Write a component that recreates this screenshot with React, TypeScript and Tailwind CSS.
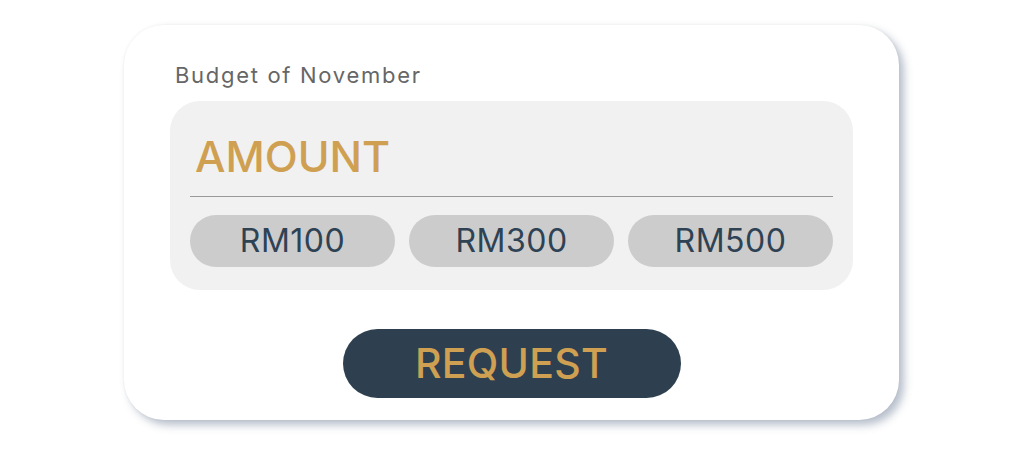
import React, { useState } from 'react';

const presets = [100, 300, 500];

const App: React.FC = () => {
  const [ amount, setAmount ] = useState<string>('');

  return (
    <div className="w-[1024px] h-[470px] bg-white pt-[25px] font-['Inter',sans-serif]">
      <div className="ml-[124px] w-[775px] h-[395px] rounded-[40px] bg-white shadow-[5px_5px_8px_rgba(95,112,140,0.45),0_0_3px_rgba(0,0,0,0.06)] px-[46px] pt-[36px]">
        <p className="text-[22px] leading-[28px] tracking-[1.7px] text-[#666666] pl-[5px]">Budget of November</p>
        <div className="mt-[12px] h-[189px] rounded-[30px] bg-[#f1f1f1] px-[20px] pt-[27px]">
          <input
            className="w-full bg-transparent outline-none px-[5px] text-[43px] font-medium leading-[56px] text-[#cfa052] placeholder:text-[#cfa052] border-b-[1.5px] border-[#999999] pb-[12px]"
            onChange={e => setAmount(e.target.value)}
            placeholder="AMOUNT"
            type="text"
            value={amount}
          />
          <div className="mt-[18px] grid grid-cols-3 gap-[14px]">
            {presets.map(value => (
              <button
                key={value}
                className="h-[52px] rounded-full bg-[#cccccc] text-[#2e4254] text-[32px] tracking-[0.5px] leading-none"
                onClick={() => setAmount(String(value))}
              >
                RM{value}
              </button>
            ))}
          </div>
        </div>
        <div className="mt-[39px] flex justify-center">
          <button className="w-[338px] h-[69px] rounded-full bg-[#2e4050] text-[#cfa052] text-[41px] tracking-[0.3px] font-medium leading-none">
            REQUEST
          </button>
        </div>
      </div>
    </div>
  );
}

export default App;
